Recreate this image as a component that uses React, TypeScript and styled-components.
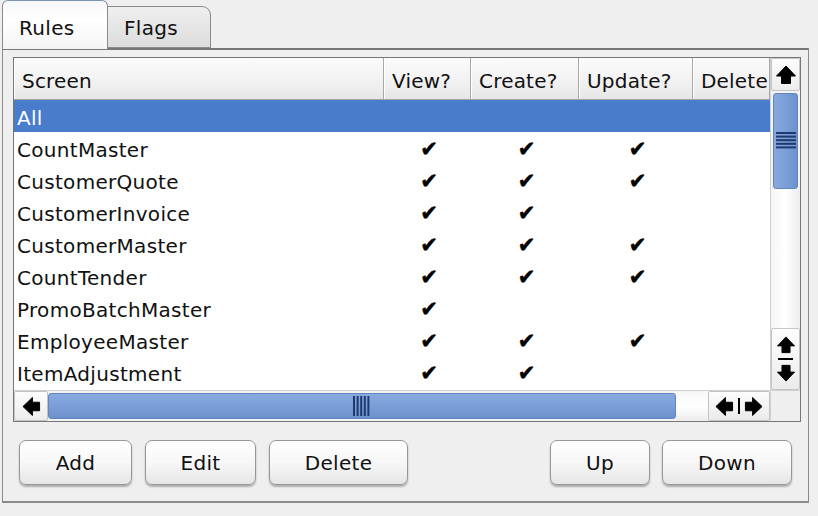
import React from "react";
import styled, { createGlobalStyle } from "styled-components";

const Global = createGlobalStyle`
  html, body { margin: 0; padding: 0; background: #efefef; }
  body { font-family: "DejaVu Sans", "Liberation Sans", sans-serif; }
  * { box-sizing: border-box; }
`;

const Page = styled.div`
  width: 818px;
  height: 516px;
  background: #efefef;
  overflow: hidden;
  font-family: "DejaVu Sans", "Liberation Sans", sans-serif;
  color: #111;
`;

const TabBar = styled.div`
  display: flex;
  align-items: flex-end;
  height: 48px;
  padding-left: 2px;
  position: relative;
  z-index: 1;
`;

const Tab = styled.div<{ $active?: boolean }>`
  display: flex;
  align-items: center;
  padding-left: 16px;
  font-size: 20px;
  letter-spacing: 0.3px;
  border: 1px solid #8a8a8a;
  ${(p) =>
    p.$active
      ? `
    width: 106px;
    height: 49px;
    margin-bottom: -1px;
    border-bottom: none;
    border-top-color: #7f93b4;
    border-radius: 6px 6px 0 0;
    background: linear-gradient(#f6f7f9, #ffffff 40%, #f4f4f4);
    padding-top: 6px;
  `
      : `
    width: 103px;
    height: 42px;
    border-left: none;
    border-radius: 0 9px 0 0;
    background: linear-gradient(#efefef, #dcdcdc);
    padding-top: 1px;
  `}
`;

const Panel = styled.div`
  margin: 0 9px 0 2px;
  height: 455px;
  border: 1px solid #8a8a8a;
  border-width: 2px 1px 2px 1px;
  border-top-color: #777;
  background: #efefef;
  padding: 7px 7px 0 10px;
`;

const Frame = styled.div`
  width: 788px;
  height: 365px;
  border: 1px solid #777;
  display: grid;
  grid-template-columns: 756px 30px;
  grid-template-rows: 332px 31px;
  background: #fff;
`;

const TableArea = styled.div`
  overflow: hidden;
  display: flex;
  flex-direction: column;
`;

const COLS = "370px 87px 108px 114px 77px";

const HeaderRow = styled.div`
  display: grid;
  grid-template-columns: ${COLS};
  height: 42px;
  border-bottom: 1px solid #a5a5a5;
  background: linear-gradient(#fbfbfb, #f1f1f1 60%, #e6e6e6);
  flex-shrink: 0;
`;

const HeaderCell = styled.div`
  display: flex;
  align-items: center;
  padding: 4px 0 0 8px;
  font-size: 20px;
  white-space: nowrap;
  overflow: hidden;
  border-right: 1px solid #a8a8a8;
  box-shadow: inset 1px 0 0 #ffffff;
  letter-spacing: 0.2px;
`;

const Row = styled.div<{ $selected?: boolean }>`
  display: grid;
  grid-template-columns: ${COLS};
  height: 32px;
  flex-shrink: 0;
  background: ${(p) => (p.$selected ? "#497ccb" : "#ffffff")};
  color: ${(p) => (p.$selected ? "#ffffff" : "#111")};
`;

const NameCell = styled.div`
  display: flex;
  align-items: center;
  padding: 3px 0 0 3px;
  font-size: 20px;
  letter-spacing: 0.3px;
  white-space: nowrap;
`;

const CheckCell = styled.div`
  display: flex;
  align-items: center;
  justify-content: center;
  padding: 3px 0 0 3px;
  font-size: 21px;
  line-height: 1;
  color: #000;
  -webkit-text-stroke: 0.6px #000;
`;

const VScroll = styled.div`
  display: flex;
  flex-direction: column;
  background: #f3f3f3;
  border-left: 1px solid #d0d0d0;
`;

const ScrollButton = styled.div<{ $h?: number; $w?: number }>`
  display: flex;
  flex-direction: column;
  align-items: center;
  justify-content: center;
  ${(p) => (p.$h ? `height: ${p.$h}px;` : "")}
  ${(p) => (p.$w ? `width: ${p.$w}px;` : "")}
  flex-shrink: 0;
  background: linear-gradient(#fdfdfd, #ececec);
  border: 1px solid #c4c4c4;
  border-radius: 2px;
  gap: 4px;
`;

const HButtonGroup = styled(ScrollButton)`
  flex-direction: row;
  gap: 4px;
  background: linear-gradient(#fdfdfd, #eaeaea);
`;

const VThumb = styled.div`
  margin: 2px 2px 0 2px;
  height: 96px;
  flex-shrink: 0;
  border: 1px solid #6286c0;
  border-radius: 3px;
  background: linear-gradient(90deg, #87a8dc, #7a9ed8 50%, #6e92cd);
  display: flex;
  align-items: center;
  justify-content: center;
`;

const Track = styled.div`
  flex: 1;
  background: linear-gradient(90deg, #f6f6f6, #ffffff 50%, #ececec);
`;

const HTrack = styled.div`
  flex: 1;
  background: linear-gradient(#f6f6f6, #ffffff 50%, #ececec);
`;

const HScroll = styled.div`
  display: flex;
  border-top: 1px solid #d0d0d0;
  background: #f3f3f3;
`;

const HThumb = styled.div`
  width: 628px;
  margin: 2px 0 2px 0;
  flex-shrink: 0;
  border: 1px solid #6286c0;
  border-radius: 3px;
  background: linear-gradient(#8aaadf, #7a9ed8 50%, #6d91cc);
  display: flex;
  align-items: center;
  justify-content: center;
`;

const Corner = styled.div`
  background: #efefef;
  border-left: 1px solid #d0d0d0;
  border-top: 1px solid #d0d0d0;
`;

const Sep = styled.div<{ $vertical?: boolean }>`
  background: #000;
  ${(p) => (p.$vertical ? "width: 2px; height: 16px;" : "width: 15px; height: 2px;")}
`;

const ButtonRow = styled.div`
  display: flex;
  margin-top: 18px;
  padding: 0 9px 0 6px;
`;

const Group = styled.div<{ $right?: boolean }>`
  display: flex;
  gap: 13px;
  ${(p) => (p.$right ? "margin-left: auto; gap: 12px;" : "")}
`;

const Button = styled.button<{ $w: number }>`
  width: ${(p) => p.$w}px;
  height: 45px;
  border: 1px solid #979797;
  border-radius: 7px;
  background: linear-gradient(#ffffff, #f7f7f7 50%, #e6e6e6);
  box-shadow: 0 2px 2px rgba(0, 0, 0, 0.28), inset 0 1px 0 #fff;
  font-family: "DejaVu Sans", "Liberation Sans", sans-serif;
  font-size: 20px;
  color: #111;
  padding: 0;
  letter-spacing: 0.3px;
`;

type Dir = "up" | "down" | "left" | "right";

const Arrow: React.FC<{ dir: Dir; size: number }> = ({ dir, size }) => {
  const rot = { up: 0, right: 90, down: 180, left: 270 }[dir];
  return (
    <svg width={size} height={size} viewBox="0 0 20 20" style={{ display: "block" }}>
      <path
        d="M10 1 L19.5 11 L14.5 11 L14.5 18.5 L5.5 18.5 L5.5 11 L0.5 11 Z"
        fill="#000"
        strokeLinejoin="round"
        stroke="#000"
        strokeWidth="1"
        transform={`rotate(${rot} 10 10)`}
      />
    </svg>
  );
};

const Grip: React.FC<{ vertical?: boolean }> = ({ vertical }) => (
  <svg width={vertical ? 20 : 18} height={vertical ? 18 : 20} viewBox={vertical ? "0 0 20 18" : "0 0 18 20"}>
    {[0, 1, 2, 3, 4].map((i) =>
      vertical ? (
        <rect key={i} x={0} y={i * 3.6} width={20} height={2} fill="#1e3a6e" />
      ) : (
        <rect key={i} x={i * 3.6} y={0} width={2} height={20} fill="#1e3a6e" />
      )
    )}
  </svg>
);

type R = { name: string; v: boolean; c: boolean; u: boolean };

const rows: R[] = [
  { name: "CountMaster", v: true, c: true, u: true },
  { name: "CustomerQuote", v: true, c: true, u: true },
  { name: "CustomerInvoice", v: true, c: true, u: false },
  { name: "CustomerMaster", v: true, c: true, u: true },
  { name: "CountTender", v: true, c: true, u: true },
  { name: "PromoBatchMaster", v: true, c: false, u: false },
  { name: "EmployeeMaster", v: true, c: true, u: true },
  { name: "ItemAdjustment", v: true, c: true, u: false },
];

const Check: React.FC<{ on: boolean }> = ({ on }) => <CheckCell>{on ? "✔" : ""}</CheckCell>;

export default function App() {
  return (
    <Page>
      <Global />
      <TabBar>
        <Tab $active>Rules</Tab>
        <Tab>Flags</Tab>
      </TabBar>
      <Panel>
        <Frame>
          <TableArea>
            <HeaderRow>
              <HeaderCell>Screen</HeaderCell>
              <HeaderCell>View?</HeaderCell>
              <HeaderCell>Create?</HeaderCell>
              <HeaderCell>Update?</HeaderCell>
              <HeaderCell>Delete</HeaderCell>
            </HeaderRow>
            <Row $selected>
              <NameCell>All</NameCell>
              <CheckCell />
              <CheckCell />
              <CheckCell />
              <CheckCell />
            </Row>
            {rows.map((r) => (
              <Row key={r.name}>
                <NameCell>{r.name}</NameCell>
                <Check on={r.v} />
                <Check on={r.c} />
                <Check on={r.u} />
                <CheckCell />
              </Row>
            ))}
          </TableArea>
          <VScroll>
            <ScrollButton $h={33}>
              <Arrow dir="up" size={20} />
            </ScrollButton>
            <VThumb>
              <Grip vertical />
            </VThumb>
            <Track />
            <ScrollButton $h={62}>
              <Arrow dir="up" size={18} />
              <Sep />
              <Arrow dir="down" size={18} />
            </ScrollButton>
          </VScroll>
          <HScroll>
            <ScrollButton $w={34}>
              <Arrow dir="left" size={19} />
            </ScrollButton>
            <HThumb>
              <Grip />
            </HThumb>
            <HTrack />
            <HButtonGroup $w={62}>
              <Arrow dir="left" size={19} />
              <Sep $vertical />
              <Arrow dir="right" size={19} />
            </HButtonGroup>
          </HScroll>
          <Corner />
        </Frame>
        <ButtonRow>
          <Group>
            <Button $w={113}>Add</Button>
            <Button $w={111}>Edit</Button>
            <Button $w={139}>Delete</Button>
          </Group>
          <Group $right>
            <Button $w={100}>Up</Button>
            <Button $w={130}>Down</Button>
          </Group>
        </ButtonRow>
      </Panel>
    </Page>
  );
}
